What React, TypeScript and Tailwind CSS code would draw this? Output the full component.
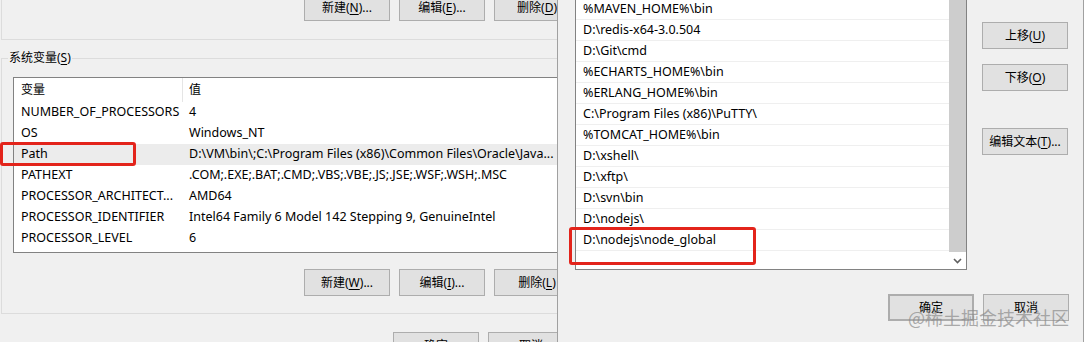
import React from "react";

const sysVars: [string, string][] = [
  ["NUMBER_OF_PROCESSORS", "4"],
  ["OS", "Windows_NT"],
  ["Path", "D:\\VM\\bin\\;C:\\Program Files (x86)\\Common Files\\Oracle\\Java..."],
  ["PATHEXT", ".COM;.EXE;.BAT;.CMD;.VBS;.VBE;.JS;.JSE;.WSF;.WSH;.MSC"],
  ["PROCESSOR_ARCHITECT...", "AMD64"],
  ["PROCESSOR_IDENTIFIER", "Intel64 Family 6 Model 142 Stepping 9, GenuineIntel"],
  ["PROCESSOR_LEVEL", "6"],
];

const paths = [
  "%MAVEN_HOME%\\bin",
  "D:\\redis-x64-3.0.504",
  "D:\\Git\\cmd",
  "%ECHARTS_HOME%\\bin",
  "%ERLANG_HOME%\\bin",
  "C:\\Program Files (x86)\\PuTTY\\",
  "%TOMCAT_HOME%\\bin",
  "D:\\xshell\\",
  "D:\\xftp\\",
  "D:\\svn\\bin",
  "D:\\nodejs\\",
  "D:\\nodejs\\node_global",
];

const Btn = ({
  label,
  keyChar,
  tail = "",
  className = "",
}: {
  label: string;
  keyChar?: string;
  tail?: string;
  className?: string;
}) => (
  <div
    className={`flex items-center justify-center shrink-0 h-[27px] w-[86px] bg-[#e1e1e1] border border-[#adadad] text-[12px] text-black ${className}`}
  >
    {label}
    {keyChar && (
      <>
        (<span className="underline underline-offset-2">{keyChar}</span>)
      </>
    )}
    {tail}
  </div>
);

const App = () => {
  return (
    <div className="relative flex w-[1084px] h-[342px] overflow-hidden bg-[#f0f0f0] font-['Noto_Sans','Noto_Sans_CJK_SC',sans-serif] text-[12.5px] text-black">
      {/* environment variables dialog, left */}
      <div className="w-[557px] h-full shrink-0 overflow-hidden flex flex-col">
        <div className="h-[40px] shrink-0 ml-[1px] w-[700px] border-l border-b border-[#dcdcdc] overflow-hidden flex gap-[9px] pl-[302px]">
          <Btn label="新建" keyChar="N" tail="..." className="-mt-[6px]" />
          <Btn label="编辑" keyChar="E" tail="..." className="-mt-[6px]" />
          <Btn label="删除" keyChar="D" className="-mt-[6px]" />
        </div>

        <fieldset className="mt-[10px] ml-[1px] w-[700px] shrink-0 border-l border-t border-b border-[#dcdcdc] pl-[6px] pb-[17px]">
          <legend className="px-[1px] leading-[16px] text-[12px]">
            系统变量(<span className="underline underline-offset-2">S</span>)
          </legend>
          <div className="mt-[11px] ml-[5px] w-[640px] h-[176px] border border-[#828282] bg-white">
            <div className="flex h-[24px] items-center">
              <div className="w-[169px] h-full flex items-center pl-[7px] border-r border-[#e5e5e5] text-[12px]">
                变量
              </div>
              <div className="pl-[6px] text-[12px]">值</div>
            </div>
            {sysVars.map(([name, value]) => (
              <div
                key={name}
                className={`flex h-[21px] items-center whitespace-nowrap ${name === "Path" ? "bg-[#ececec]" : ""}`}
              >
                <div className="w-[169px] shrink-0 pl-[7px]">{name}</div>
                <div className="pl-[6px]">{value}</div>
              </div>
            ))}
          </div>
          <div className="mt-[16px] ml-[296px] flex gap-[9px]">
            <Btn label="新建" keyChar="W" tail="..." />
            <Btn label="编辑" keyChar="I" tail="..." />
            <Btn label="删除" keyChar="L" />
          </div>
        </fieldset>

        <div className="mt-[18px] ml-[393px] flex gap-[9px]">
          <Btn label="确定" />
          <Btn label="取消" />
        </div>
      </div>

      {/* edit path dialog, right */}
      <div className="w-[527px] h-full shrink-0 border-l border-r border-[#a0a0a0] flex flex-col">
        <div className="flex">
          <div className="ml-[17px] w-[392px] h-[270px] shrink-0 flex bg-white border-l border-r border-b border-[#828282] overflow-hidden">
            <div className="flex-1 -mt-[1px]">
              {paths.map((p) => (
                <div
                  key={p}
                  className="h-[21px] flex items-center pl-[7px] border-b border-[#efefef] whitespace-nowrap"
                >
                  {p}
                </div>
              ))}
            </div>
            <div className="w-[17px] flex flex-col">
              <div className="flex-1 bg-[#cdcdcd]" />
              <div className="h-[17px] flex items-center justify-center">
                <svg width="9" height="6" viewBox="0 0 9 6">
                  <path d="M1 1 L4.5 4.5 L8 1" fill="none" stroke="#606060" strokeWidth="1.6" />
                </svg>
              </div>
            </div>
          </div>
          <div className="ml-[15px] flex flex-col">
            <Btn label="上移" keyChar="U" className="mt-[22px]" />
            <Btn label="下移" keyChar="O" className="mt-[15px]" />
            <Btn label="编辑文本" keyChar="T" tail="..." className="mt-[37px]" />
          </div>
        </div>
        <div className="mt-[24px] ml-[330px] flex gap-[9px]">
          <Btn label="确定" className="border-2 border-[#0078d7]" />
          <Btn label="取消" />
        </div>
      </div>

      {/* annotations */}
      <div className="absolute left-0 top-[142px] w-[136px] h-[24px] border-[3px] border-[#e3241b] rounded-[3px]" />
      <div className="absolute left-[569px] top-[227px] w-[187px] h-[38px] border-[3px] border-[#e3241b] rounded-[3px]" />
      <div className="absolute left-[908px] top-[305px] text-[18px] leading-[24px] text-[#8a8a8a]/70 font-['Noto_Sans_CJK_SC',sans-serif]">
        @稀土掘金技术社区
      </div>
    </div>
  );
};

export default App;
